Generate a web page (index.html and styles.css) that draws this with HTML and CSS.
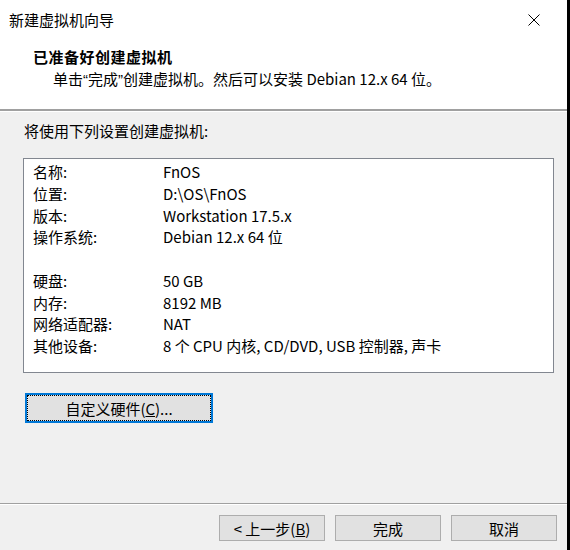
FILE: index.html
```html
<!DOCTYPE html>
<html lang="zh-CN">
<head>
  <meta charset="UTF-8">
  <title>新建虚拟机向导</title>
  <link rel="stylesheet" href="styles.css">
</head>
<body>
  <div class="window">
    <div class="top">
      <div class="titlebar">
        <span class="title">新建虚拟机向导</span>
        <svg class="close" width="12" height="12" viewBox="0 0 12 12">
          <path d="M0.5 0.5 L11.5 11.5 M11.5 0.5 L0.5 11.5" stroke="#000" stroke-width="1" fill="none"/>
        </svg>
      </div>
      <div class="header">
        <div class="heading">已准备好创建虚拟机</div>
        <div class="subtitle">单击<span class="q">“</span>完成<span class="q">”</span>创建虚拟机。然后可以安装 Debian 12.x 64 位。</div>
      </div>
    </div>

    <div class="content">
      <div class="intro">将使用下列设置创建虚拟机:</div>
      <div class="summary">
        <div class="row"><span class="key">名称:</span><span>FnOS</span></div>
        <div class="row"><span class="key">位置:</span><span>D:\OS\FnOS</span></div>
        <div class="row"><span class="key">版本:</span><span>Workstation 17.5.x</span></div>
        <div class="row"><span class="key">操作系统:</span><span>Debian 12.x 64 位</span></div>
        <div class="row"></div>
        <div class="row"><span class="key">硬盘:</span><span>50 GB</span></div>
        <div class="row"><span class="key">内存:</span><span>8192 MB</span></div>
        <div class="row"><span class="key">网络适配器:</span><span>NAT</span></div>
        <div class="row"><span class="key">其他设备:</span><span>8 个 CPU 内核, CD/DVD, USB 控制器, 声卡</span></div>
      </div>
      <button class="btn custom">自定义硬件(<u>C</u>)...</button>
    </div>

    <div class="footer">
      <button class="btn">&lt; 上一步(<u>B</u>)</button>
      <button class="btn">完成</button>
      <button class="btn">取消</button>
    </div>
  </div>
</body>
</html>
```

FILE: styles.css
```css
* {
  box-sizing: border-box;
}
body {
  margin: 0;
  background-color: #000;
  font-family: "Noto Sans CJK SC", "Microsoft YaHei", sans-serif;
  font-size: 15px;
  color: #000;
}
.window {
  width: 567px;
  height: 550px;
  background-color: #f0f0f0;
  display: flex;
  flex-direction: column;
}
.top {
  background-color: #fff;
  height: 112px;
  border-bottom: 1px solid #fff;
  box-shadow: inset 0 -2px 0 #a0a0a0;
}
.titlebar {
  height: 40px;
  display: flex;
  align-items: center;
  justify-content: space-between;
  padding: 0 27px 1px 9px;
}
.header {
  padding: 6px 0 0 33px;
}
.heading {
  font-weight: bold;
  line-height: 22px;
  letter-spacing: 0.5px;
}
.subtitle {
  line-height: 22px;
  padding-left: 20px;
}
.q {
  font-family: "Liberation Sans", sans-serif;
}
.content {
  flex: 1;
  padding: 8px 0 0 23px;
  border-bottom: 1px solid #a0a0a0;
  box-shadow: 0 1px 0 #fff;
}
.intro {
  line-height: 22px;
  padding-left: 1px;
}
.summary {
  width: 531px;
  height: 215px;
  margin-top: 16px;
  background-color: #fff;
  border: 1px solid #828790;
  padding: 2px 0 0 9px;
}
.row {
  display: flex;
  height: 21.75px;
  line-height: 21.75px;
}
.key {
  width: 130px;
}
.btn {
  font-family: inherit;
  font-size: 15px;
  color: #000;
  background-color: #e1e1e1;
  border: 1px solid #adadad;
  padding: 0;
  margin: 0;
}
.custom {
  display: block;
  width: 188px;
  height: 30px;
  margin: 20px 0 0 2px;
  border: 2px solid #0078d7;
  outline: 1px dotted #000;
  outline-offset: -3px;
}
.footer {
  display: flex;
  justify-content: flex-end;
  gap: 10px;
  padding: 11px 10px 0 0;
  height: 46px;
}
.footer .btn {
  width: 106px;
  height: 26px;
}
```
